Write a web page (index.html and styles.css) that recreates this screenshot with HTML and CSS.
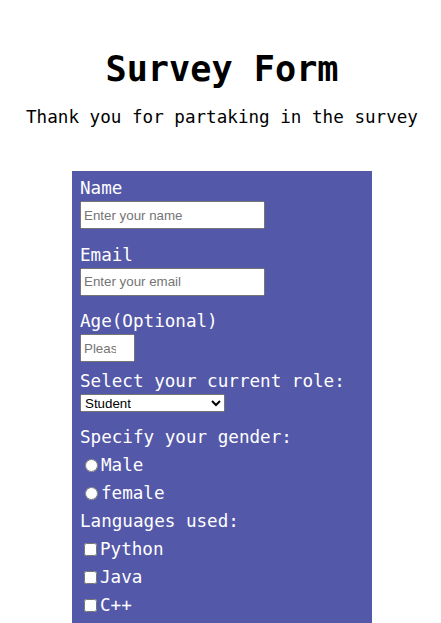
FILE: index.html
```html
<!DOCTYPE html>
<html lang="en">
<head>
<meta charset="utf-8">
<title>Survey Form</title>
<link rel="stylesheet" href="styles.css">
</head>
<body>
<header class="header">
  <h1 class="title">Survey Form</h1>
  <p class="subtitle">Thank you for partaking in the survey</p>
</header>
<form class="survey">
  <div class="field">
    <label class="label" for="name">Name</label>
    <input class="text-input" id="name" type="text" placeholder="Enter your name">
  </div>
  <div class="field">
    <label class="label" for="email">Email</label>
    <input class="text-input" id="email" type="email" placeholder="Enter your email">
  </div>
  <div class="field field-age">
    <label class="label" for="age">Age(Optional)</label>
    <input class="age-input" id="age" type="number" placeholder="Please enter your age">
  </div>
  <div class="field field-role">
    <label class="label" for="role">Select your current role:</label>
    <select class="role-select" id="role">
      <option>Student</option>
      <option>Full time job</option>
      <option>Prefer not to say</option>
    </select>
  </div>
  <div class="group">
    <div class="row">Specify your gender:</div>
    <label class="row"><input class="radio" type="radio" name="gender">Male</label>
    <label class="row"><input class="radio" type="radio" name="gender">female</label>
    <div class="row">Languages used:</div>
    <label class="row"><input class="check" type="checkbox">Python</label>
    <label class="row"><input class="check" type="checkbox">Java</label>
    <label class="row"><input class="check" type="checkbox">C++</label>
  </div>
</form>
</body>
</html>
```

FILE: styles.css
```css
html, body {
  background: #ffffff;
}
body {
  margin: 0 5px 0 8px;
  font-family: "DejaVu Sans Mono", monospace;
  font-size: 17.6px;
  color: #000000;
}
.header {
  text-align: center;
  padding-top: 48px;
}
.title {
  margin: 0 0 18px;
  font-size: 35.2px;
  font-weight: bold;
  line-height: normal;
}
.subtitle {
  margin: 0 0 44px;
  font-size: 17.6px;
  line-height: normal;
}
.survey {
  width: 300px;
  margin: 0 auto;
  box-sizing: border-box;
  background: #5458a8;
  color: #ffffff;
  padding: 7px 8px 40px;
}
.field {
  display: flex;
  flex-direction: column;
  align-items: flex-start;
  margin-bottom: 15.5px;
}
.field-age {
  margin-bottom: 9px;
}
.field-role {
  margin-bottom: 11px;
}
.label {
  display: block;
  line-height: normal;
  margin-bottom: 3px;
}
.text-input {
  width: 185px;
  height: 28px;
  box-sizing: border-box;
  margin: 0;
  font-family: "Liberation Sans", Arial, sans-serif;
  font-size: 13.33px;
}
.age-input {
  width: 55px;
  height: 28px;
  box-sizing: border-box;
  margin: 0;
  font-family: "Liberation Sans", Arial, sans-serif;
  font-size: 13.33px;
}
.role-select {
  width: 145px;
  height: 18px;
  margin: 0;
  font-family: "Liberation Sans", Arial, sans-serif;
  font-size: 13.33px;
}
.row {
  display: block;
  line-height: 28px;
}
.radio {
  margin: 0 3px 0 5px;
  vertical-align: -1px;
}
.check {
  margin: 0 3px 0 4px;
  vertical-align: -1px;
}
```
